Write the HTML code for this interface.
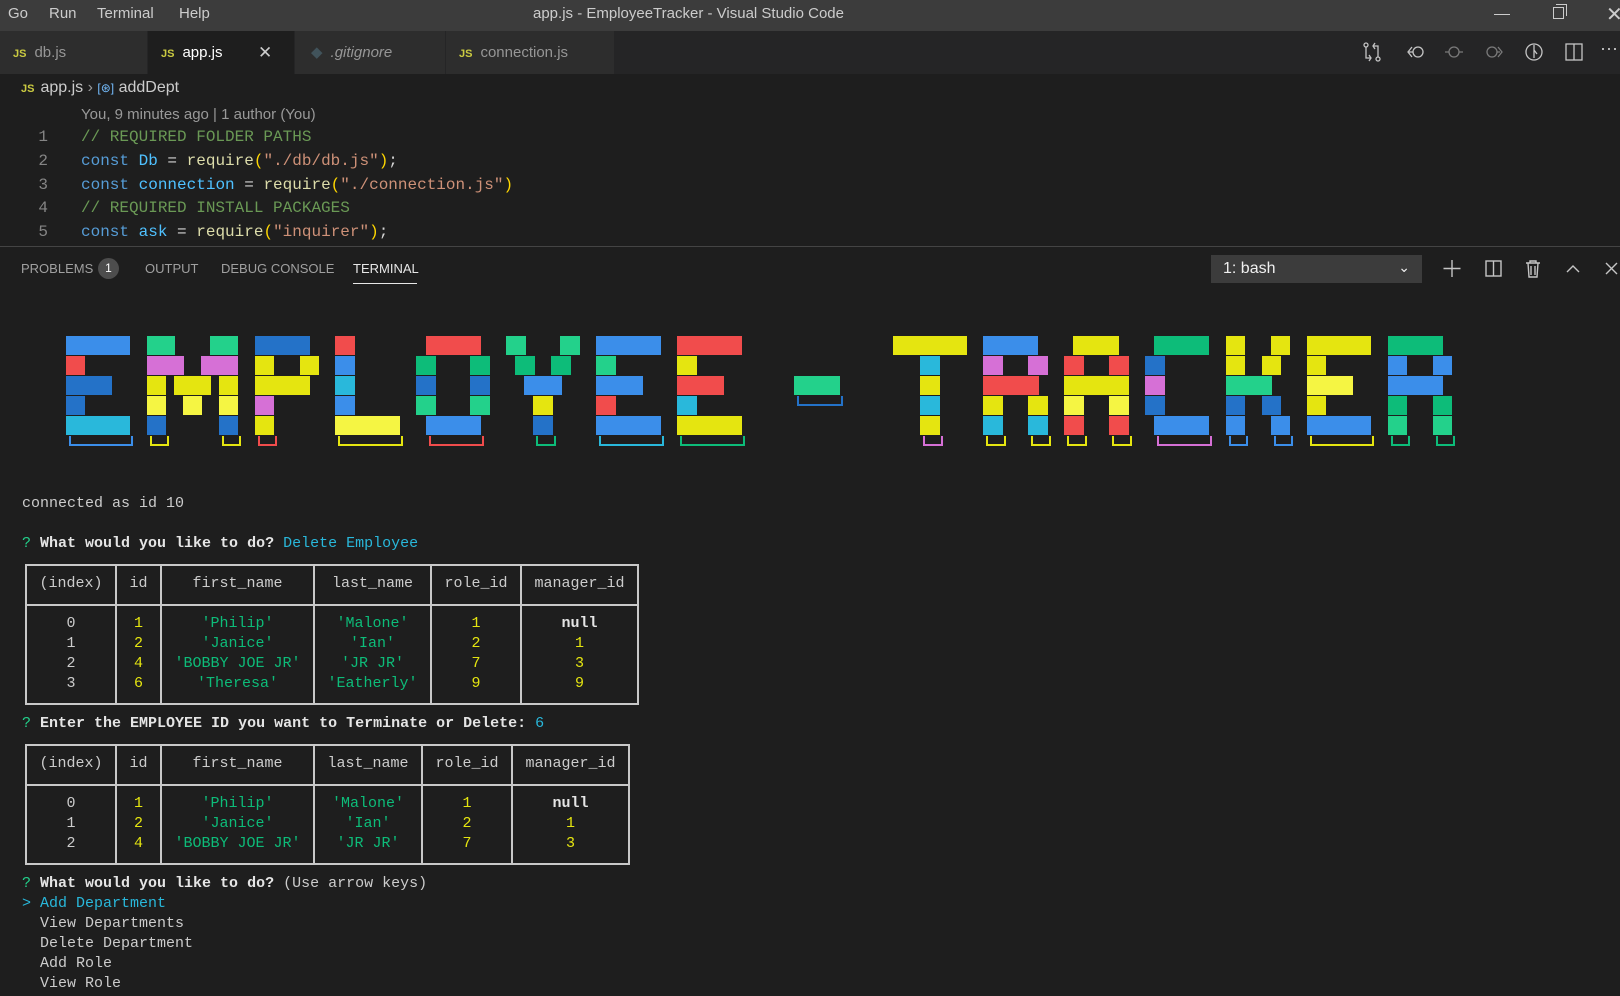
<!DOCTYPE html>
<html><head><meta charset="utf-8"><style>
*{margin:0;padding:0;box-sizing:border-box}
body{width:1620px;height:996px;background:#1e1e1e;position:relative;overflow:hidden;font-family:"Liberation Sans",sans-serif;color:#ccc}
.a{position:absolute;white-space:pre}
#title{left:0;top:0;width:1620px;height:31px;background:#3c3c3c}
#tabs{left:0;top:31px;width:1620px;height:43px;background:#252526}
.tab{position:absolute;top:0;height:43px;background:#2d2d2d;border-right:1px solid #252526;font-size:15px;line-height:43px;color:#969696}
.js{color:#cbcb41;font-weight:bold;font-size:11px;margin:0 8px 0 13px}
.code{font-family:"Liberation Mono",monospace;font-size:16px}
.term{font-family:"Liberation Mono",monospace;font-size:15px;line-height:20px;left:22px;color:#cccccc}
.b{position:absolute;height:19px}
.r0{top:336px}.r1{top:356px}.r2{top:376px}.r3{top:396px}.r4{top:416px}
.B{background:#3b8eea}.D{background:#2472c8}.R{background:#f14c4c}.C{background:#29b8db}.G{background:#23d18b}.g{background:#0dbc79}.M{background:#d670d6}.Y{background:#e5e510}.L{background:#f5f543}
.k{position:absolute;top:436px;height:10px;border:2px solid;border-top:none}
.vl{position:absolute;width:2px;background:#c8c8c8}
.hl{position:absolute;height:2px;background:#c8c8c8}
.y{color:#e5e510}.gr{color:#0dbc79}.w{color:#e5e5e5;font-weight:bold}.q{color:#23d18b}.cy{color:#29b8db}
.ico{position:absolute}
.tr{position:absolute;left:26px;display:flex;font-family:"Liberation Mono",monospace;font-size:15px;line-height:20px;color:#ccc;white-space:pre}
.tr span{display:block;text-align:center}
.t1 span:nth-child(1){width:90px}.t1 span:nth-child(2){width:45px}.t1 span:nth-child(3){width:153px}.t1 span:nth-child(4){width:117px}.t1 span:nth-child(5){width:90px}.t1 span:nth-child(6){width:117px}
.t2 span:nth-child(1){width:90px}.t2 span:nth-child(2){width:45px}.t2 span:nth-child(3){width:153px}.t2 span:nth-child(4){width:108px}.t2 span:nth-child(5){width:90px}.t2 span:nth-child(6){width:117px}
</style></head><body>
<div class="a" id="title"></div>
<div class="a" style="left:8px;top:5px;font-size:15px;color:#ccc">Go</div>
<div class="a" style="left:49px;top:5px;font-size:15px;color:#ccc">Run</div>
<div class="a" style="left:97px;top:5px;font-size:15px;color:#ccc">Terminal</div>
<div class="a" style="left:179px;top:5px;font-size:15px;color:#ccc">Help</div>
<div class="a" style="left:533px;top:5px;font-size:15px;color:#ccc">app.js - EmployeeTracker - Visual Studio Code</div>
<div class="a" style="left:1494px;top:14px;width:16px;height:1px;background:#ccc"></div>
<div class="a" style="left:1553px;top:7px;width:11px;height:12px;border:1px solid #ccc"></div>
<div class="a" style="left:1556px;top:4px;width:11px;height:12px;border-top:1px solid #ccc;border-right:1px solid #ccc"></div>
<div class="a" style="left:1606px;top:2px;font-size:20px;color:#ccc">✕</div>

<div class="a" id="tabs"></div>
<div class="tab" style="left:0;top:31px;width:148px"><span class="js">JS</span>db.js</div>
<div class="tab" style="left:148px;top:31px;width:147px;background:#1e1e1e;color:#fff"><span class="js">JS</span>app.js<span style="position:absolute;left:110px;color:#ccc;font-size:17px">✕</span></div>
<div class="tab" style="left:295px;top:31px;width:151px;font-style:italic"><span style="color:#41535b;margin:0 8px 0 16px;font-style:normal">◆</span>.gitignore</div>
<div class="tab" style="left:446px;top:31px;width:169px"><span class="js">JS</span>connection.js</div>
<svg class="ico" style="left:1360px;top:41px" width="250" height="22" fill="none" stroke="#c5c5c5" stroke-width="1.3">
<circle cx="6" cy="4" r="2"/><path d="M6 6v11h5M9 14l2 3-2 3"/><circle cx="18" cy="18" r="2"/><path d="M18 16V5h-5M15 2l-2 3 2 3"/>
<circle cx="58" cy="11" r="5"/><path d="M53 11h-4M52 6l-4 5 4 5"/>
<g stroke="#7a7a7a"><circle cx="94" cy="11" r="5"/><path d="M85 11h4M99 11h4"/><circle cx="132" cy="11" r="5"/><path d="M137 11h3M138 6l4 5-4 5"/></g>
<circle cx="174" cy="11" r="8"/><path d="M174 4v13M174 9l3 4"/>
<rect x="206" y="3" width="16" height="16"/><path d="M214 3v16"/>
</svg>
<div class="a" style="left:1600px;top:38px;font-size:18px;color:#ccc">···</div>

<div class="a" style="left:21px;top:79px;font-size:16px;color:#ccc"><span class="js" style="margin:0 6px 0 0">JS</span>app.js <span style="color:#999">›</span> <span style="color:#75beff;font-size:12px">[⊛]</span> addDept</div>
<div class="a" style="left:81px;top:106px;font-size:15px;color:#999">You, 9 minutes ago | 1 author (You)</div>
<div class="a code" style="left:36px;top:126px;line-height:23.8px;color:#858585;text-align:right;width:12px">1
2
3
4
5</div>
<div class="a code" style="left:81px;top:126px;line-height:23.8px;color:#d4d4d4"><span style="color:#6a9955">// REQUIRED FOLDER PATHS</span>
<span style="color:#569cd6">const</span> <span style="color:#4fc1ff">Db</span> = <span style="color:#dcdcaa">require</span><span style="color:#ffd700">(</span><span style="color:#ce9178">"./db/db.js"</span><span style="color:#ffd700">)</span>;
<span style="color:#569cd6">const</span> <span style="color:#4fc1ff">connection</span> = <span style="color:#dcdcaa">require</span><span style="color:#ffd700">(</span><span style="color:#ce9178">"./connection.js"</span><span style="color:#ffd700">)</span>
<span style="color:#6a9955">// REQUIRED INSTALL PACKAGES</span>
<span style="color:#569cd6">const</span> <span style="color:#4fc1ff">ask</span> = <span style="color:#dcdcaa">require</span><span style="color:#ffd700">(</span><span style="color:#ce9178">"inquirer"</span><span style="color:#ffd700">)</span>;</div>

<div class="a" style="left:0;top:246px;width:1620px;height:1px;background:#444"></div>
<div class="a" style="left:21px;top:261px;font-size:13px;color:#a0a0a0">PROBLEMS</div>
<div class="a" style="left:98px;top:258px;width:21px;height:21px;border-radius:50%;background:#4d4d4d;color:#fff;font-size:12px;text-align:center;line-height:21px">1</div>
<div class="a" style="left:145px;top:261px;font-size:13px;color:#a0a0a0">OUTPUT</div>
<div class="a" style="left:221px;top:261px;font-size:13px;color:#a0a0a0">DEBUG CONSOLE</div>
<div class="a" style="left:353px;top:261px;font-size:13px;color:#e7e7e7">TERMINAL</div>
<div class="a" style="left:353px;top:283px;width:64px;height:1px;background:#e7e7e7"></div>
<div class="a" style="left:1211px;top:255px;width:211px;height:28px;background:#3c3c3c;color:#f0f0f0;font-size:16px;line-height:28px;padding-left:12px">1: bash<span style="position:absolute;right:12px;top:-2px;font-size:14px">⌄</span></div>
<svg class="ico" style="left:1440px;top:258px" width="180" height="22" fill="none" stroke="#c5c5c5" stroke-width="1.4">
<path d="M12 2v17M3.5 10.5h17"/><rect x="46" y="3" width="15" height="15"/><path d="M53.5 3v15"/>
<path d="M86 5h14M90 5V3h6v2M88 5l1 14h8l1-14M91 8v9M95 8v9"/><path d="M127 14l6-6 6 6"/><path d="M166 5l11 11M177 5l-11 11"/></svg>

<!-- ASCII art -->
<i class="b r0 B" style="left:66px;width:64px"></i><i class="b r1 R" style="left:66px;width:19px"></i><i class="b r2 D" style="left:66px;width:46px"></i><i class="b r3 D" style="left:66px;width:19px"></i><i class="b r4 C" style="left:66px;width:64px"></i>
<i class="b r0 G" style="left:147px;width:28px"></i><i class="b r0 G" style="left:210px;width:28px"></i><i class="b r1 M" style="left:147px;width:37px"></i><i class="b r1 M" style="left:201px;width:37px"></i><i class="b r2 Y" style="left:147px;width:19px"></i><i class="b r2 Y" style="left:174px;width:37px"></i><i class="b r2 Y" style="left:219px;width:19px"></i><i class="b r3 L" style="left:147px;width:19px"></i><i class="b r3 L" style="left:183px;width:19px"></i><i class="b r3 L" style="left:219px;width:19px"></i><i class="b r4 D" style="left:147px;width:19px"></i><i class="b r4 D" style="left:219px;width:19px"></i>
<i class="b r0 D" style="left:255px;width:55px"></i><i class="b r1 Y" style="left:255px;width:19px"></i><i class="b r1 Y" style="left:300px;width:19px"></i><i class="b r2 Y" style="left:255px;width:55px"></i><i class="b r3 M" style="left:255px;width:19px"></i><i class="b r4 Y" style="left:255px;width:19px"></i>
<i class="b r0 R" style="left:335px;width:20px"></i><i class="b r1 B" style="left:335px;width:20px"></i><i class="b r2 C" style="left:335px;width:20px"></i><i class="b r3 B" style="left:335px;width:20px"></i><i class="b r4 L" style="left:335px;width:65px"></i>
<i class="b r0 R" style="left:426px;width:55px"></i><i class="b r1 g" style="left:416px;width:20px"></i><i class="b r1 g" style="left:470px;width:20px"></i><i class="b r2 D" style="left:416px;width:20px"></i><i class="b r2 D" style="left:470px;width:20px"></i><i class="b r3 G" style="left:416px;width:20px"></i><i class="b r3 G" style="left:470px;width:20px"></i><i class="b r4 B" style="left:426px;width:55px"></i>
<i class="b r0 G" style="left:506px;width:20px"></i><i class="b r0 G" style="left:560px;width:20px"></i><i class="b r1 g" style="left:515px;width:20px"></i><i class="b r1 g" style="left:551px;width:20px"></i><i class="b r2 B" style="left:524px;width:38px"></i><i class="b r3 Y" style="left:533px;width:20px"></i><i class="b r4 D" style="left:533px;width:20px"></i>
<i class="b r0 B" style="left:596px;width:65px"></i><i class="b r1 G" style="left:596px;width:20px"></i><i class="b r2 B" style="left:596px;width:47px"></i><i class="b r3 R" style="left:596px;width:20px"></i><i class="b r4 B" style="left:596px;width:65px"></i>
<i class="b r0 R" style="left:677px;width:65px"></i><i class="b r1 Y" style="left:677px;width:20px"></i><i class="b r2 R" style="left:677px;width:47px"></i><i class="b r3 C" style="left:677px;width:20px"></i><i class="b r4 Y" style="left:677px;width:65px"></i>
<i class="b r2 G" style="left:794px;width:46px"></i>
<i class="b r0 Y" style="left:893px;width:74px"></i><i class="b r1 C" style="left:920px;width:20px"></i><i class="b r2 Y" style="left:920px;width:20px"></i><i class="b r3 C" style="left:920px;width:20px"></i><i class="b r4 Y" style="left:920px;width:20px"></i>
<i class="b r0 B" style="left:983px;width:55px"></i><i class="b r1 M" style="left:983px;width:20px"></i><i class="b r1 M" style="left:1028px;width:20px"></i><i class="b r2 R" style="left:983px;width:56px"></i><i class="b r3 Y" style="left:983px;width:20px"></i><i class="b r3 Y" style="left:1028px;width:20px"></i><i class="b r4 C" style="left:983px;width:20px"></i><i class="b r4 C" style="left:1028px;width:20px"></i>
<i class="b r0 Y" style="left:1073px;width:46px"></i><i class="b r1 R" style="left:1064px;width:20px"></i><i class="b r1 R" style="left:1109px;width:20px"></i><i class="b r2 Y" style="left:1064px;width:65px"></i><i class="b r3 L" style="left:1064px;width:20px"></i><i class="b r3 L" style="left:1109px;width:20px"></i><i class="b r4 R" style="left:1064px;width:20px"></i><i class="b r4 R" style="left:1109px;width:20px"></i>
<i class="b r0 g" style="left:1154px;width:55px"></i><i class="b r1 D" style="left:1145px;width:20px"></i><i class="b r2 M" style="left:1145px;width:20px"></i><i class="b r3 D" style="left:1145px;width:20px"></i><i class="b r4 B" style="left:1154px;width:55px"></i>
<i class="b r0 Y" style="left:1226px;width:19px"></i><i class="b r0 Y" style="left:1271px;width:19px"></i><i class="b r1 Y" style="left:1226px;width:19px"></i><i class="b r1 Y" style="left:1262px;width:19px"></i><i class="b r2 G" style="left:1226px;width:46px"></i><i class="b r3 D" style="left:1226px;width:19px"></i><i class="b r3 D" style="left:1262px;width:19px"></i><i class="b r4 B" style="left:1226px;width:19px"></i><i class="b r4 B" style="left:1271px;width:19px"></i>
<i class="b r0 Y" style="left:1307px;width:64px"></i><i class="b r1 Y" style="left:1307px;width:19px"></i><i class="b r2 L" style="left:1307px;width:46px"></i><i class="b r3 Y" style="left:1307px;width:19px"></i><i class="b r4 B" style="left:1307px;width:64px"></i>
<i class="b r0 g" style="left:1388px;width:55px"></i><i class="b r1 B" style="left:1388px;width:19px"></i><i class="b r1 B" style="left:1433px;width:19px"></i><i class="b r2 B" style="left:1388px;width:55px"></i><i class="b r3 g" style="left:1388px;width:19px"></i><i class="b r3 g" style="left:1433px;width:19px"></i><i class="b r4 G" style="left:1388px;width:19px"></i><i class="b r4 G" style="left:1433px;width:19px"></i>
<i class="k" style="left:69px;width:64px;border-color:#3b8eea"></i>
<i class="k" style="left:150px;width:19px;border-color:#e5e510"></i><i class="k" style="left:222px;width:19px;border-color:#e5e510"></i>
<i class="k" style="left:258px;width:19px;border-color:#f14c4c"></i>
<i class="k" style="left:338px;width:65px;border-color:#e5e510"></i>
<i class="k" style="left:429px;width:55px;border-color:#f14c4c"></i>
<i class="k" style="left:536px;width:20px;border-color:#0dbc79"></i>
<i class="k" style="left:599px;width:65px;border-color:#29b8db"></i>
<i class="k" style="left:680px;width:65px;border-color:#0dbc79"></i>
<i class="k" style="left:797px;width:46px;top:396px;border-color:#2472c8"></i>
<i class="k" style="left:923px;width:20px;border-color:#d670d6"></i>
<i class="k" style="left:986px;width:20px;border-color:#e5e510"></i><i class="k" style="left:1031px;width:20px;border-color:#e5e510"></i>
<i class="k" style="left:1067px;width:20px;border-color:#e5e510"></i><i class="k" style="left:1112px;width:20px;border-color:#e5e510"></i>
<i class="k" style="left:1157px;width:55px;border-color:#d670d6"></i>
<i class="k" style="left:1229px;width:19px;border-color:#3b8eea"></i><i class="k" style="left:1274px;width:19px;border-color:#3b8eea"></i>
<i class="k" style="left:1310px;width:64px;border-color:#e5e510"></i>
<i class="k" style="left:1391px;width:19px;border-color:#0dbc79"></i><i class="k" style="left:1436px;width:19px;border-color:#0dbc79"></i>

<!-- table lines -->
<div class="vl" style="left:25px;top:564px;height:141px"></div><div class="vl" style="left:115px;top:564px;height:141px"></div><div class="vl" style="left:160px;top:564px;height:141px"></div><div class="vl" style="left:313px;top:564px;height:141px"></div><div class="vl" style="left:430px;top:564px;height:141px"></div><div class="vl" style="left:520px;top:564px;height:141px"></div><div class="vl" style="left:637px;top:564px;height:141px"></div>
<div class="hl" style="left:25px;top:564px;width:614px"></div><div class="hl" style="left:25px;top:604px;width:614px"></div><div class="hl" style="left:25px;top:703px;width:614px"></div>
<div class="vl" style="left:25px;top:744px;height:121px"></div><div class="vl" style="left:115px;top:744px;height:121px"></div><div class="vl" style="left:160px;top:744px;height:121px"></div><div class="vl" style="left:313px;top:744px;height:121px"></div><div class="vl" style="left:421px;top:744px;height:121px"></div><div class="vl" style="left:511px;top:744px;height:121px"></div><div class="vl" style="left:628px;top:744px;height:121px"></div>
<div class="hl" style="left:25px;top:744px;width:605px"></div><div class="hl" style="left:25px;top:784px;width:605px"></div><div class="hl" style="left:25px;top:863px;width:605px"></div>

<!-- table cells -->
<div class="tr t1" style="top:574px"><span>(index)</span><span>id</span><span>first_name</span><span>last_name</span><span>role_id</span><span>manager_id</span></div>
<div class="tr t1" style="top:614px"><span>0</span><span class="y">1</span><span class="gr">'Philip'</span><span class="gr">'Malone'</span><span class="y">1</span><span class="w">null</span></div>
<div class="tr t1" style="top:634px"><span>1</span><span class="y">2</span><span class="gr">'Janice'</span><span class="gr">'Ian'</span><span class="y">2</span><span class="y">1</span></div>
<div class="tr t1" style="top:654px"><span>2</span><span class="y">4</span><span class="gr">'BOBBY JOE JR'</span><span class="gr">'JR JR'</span><span class="y">7</span><span class="y">3</span></div>
<div class="tr t1" style="top:674px"><span>3</span><span class="y">6</span><span class="gr">'Theresa'</span><span class="gr">'Eatherly'</span><span class="y">9</span><span class="y">9</span></div>
<div class="tr t2" style="top:754px"><span>(index)</span><span>id</span><span>first_name</span><span>last_name</span><span>role_id</span><span>manager_id</span></div>
<div class="tr t2" style="top:794px"><span>0</span><span class="y">1</span><span class="gr">'Philip'</span><span class="gr">'Malone'</span><span class="y">1</span><span class="w">null</span></div>
<div class="tr t2" style="top:814px"><span>1</span><span class="y">2</span><span class="gr">'Janice'</span><span class="gr">'Ian'</span><span class="y">2</span><span class="y">1</span></div>
<div class="tr t2" style="top:834px"><span>2</span><span class="y">4</span><span class="gr">'BOBBY JOE JR'</span><span class="gr">'JR JR'</span><span class="y">7</span><span class="y">3</span></div>

<!-- terminal text -->
<div class="a term" style="top:494px">connected as id 10

<span class="q">?</span> <span class="w">What would you like to do?</span> <span class="cy">Delete Employee</span>








<span class="q">?</span> <span class="w">Enter the EMPLOYEE ID you want to Terminate or Delete:</span> <span class="cy">6</span>







<span class="q">?</span> <span class="w">What would you like to do?</span> (Use arrow keys)
<span class="cy">&gt; Add Department</span>
  View Departments
  Delete Department
  Add Role
  View Role</div>
</body></html>
